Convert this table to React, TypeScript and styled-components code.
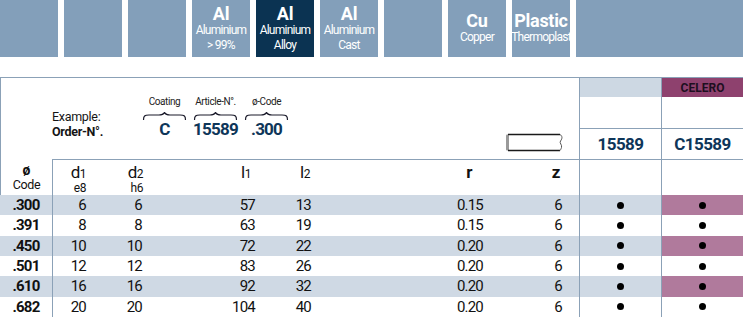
import React from "react";
import styled, { createGlobalStyle } from "styled-components";

const FONT = `Roboto, "Liberation Sans", sans-serif`;
const LINE = "#8ba1b7";
const TILE = "#839fba";
const TILE_DARK = "#0b3352";
const STRIPE = "#cfd9e4";
const PURPLE = "#8e416e";
const PURPLE_STRIPE = "#b07a9c";
const NAVY = "#0e3659";

const GlobalStyle = createGlobalStyle`
  html, body { margin: 0; padding: 0; background: #fff; }
  body { font-family: ${FONT}; color: #111; }
`;

const Page = styled.div`
  width: 743px;
  height: 318px;
  overflow: hidden;
`;

const TopBar = styled.div`
  display: grid;
  grid-template-columns: repeat(9, 58px) 1fr;
  gap: 6px;
  height: 57px;
`;

const Tile = styled.div<{ $dark?: boolean }>`
  background: ${(p) => (p.$dark ? TILE_DARK : TILE)};
  color: #fff;
  display: flex;
  flex-direction: column;
  align-items: center;
  justify-content: center;
  text-align: center;
  overflow: hidden;
`;

const TileSymbol = styled.div`
  font-weight: 700;
  font-size: 18px;
  line-height: 18px;
  letter-spacing: -0.3px;
`;

const TileName = styled.div`
  font-size: 12px;
  line-height: 15px;
  letter-spacing: -0.75px;
  white-space: nowrap;
`;

const Table = styled.div`
  margin-top: 20px;
  border-top: 1px solid ${LINE};
`;

const HeadRow = styled.div`
  display: grid;
  grid-template-columns: 578px 82px 82px;
  height: 81px;
  border-left: 1px solid ${LINE};
`;

const ExampleCell = styled.div`
  display: flex;
  align-items: flex-end;
  padding-left: 51px;
  padding-bottom: 20px;
`;

const ExampleBlock = styled.div`
  display: flex;
  flex-direction: column;
  width: 90px;
`;

const ExampleLine = styled.div<{ $bold?: boolean }>`
  font-size: 12.5px;
  line-height: 15px;
  letter-spacing: -0.3px;
  font-weight: ${(p) => (p.$bold ? 700 : 400)};
  color: #151515;
`;

const Groups = styled.div`
  display: flex;
  gap: 6px;
`;

const Group = styled.div`
  width: 45px;
  display: flex;
  flex-direction: column;
  align-items: center;
`;

const GroupLabel = styled.div`
  font-size: 10px;
  line-height: 12px;
  letter-spacing: -0.4px;
  margin-bottom: 4px;
  color: #222;
  white-space: nowrap;
`;

const GroupValue = styled.div`
  font-size: 17px;
  line-height: 19px;
  letter-spacing: -0.8px;
  font-weight: 700;
  color: ${NAVY};
`;

const PinWrap = styled.div`
  margin-left: auto;
  margin-right: 14px;
  margin-bottom: -13px;
  display: flex;
`;

const VariantCell = styled.div`
  border-left: 1px solid ${LINE};
  display: grid;
  grid-template-rows: 19px 31px 31px;
`;

const Band = styled.div<{ $celero?: boolean }>`
  background: ${(p) => (p.$celero ? PURPLE : "#cdd8e3")};
  display: flex;
  align-items: center;
  justify-content: center;
  font-size: 12px;
  font-weight: 700;
  color: #1d0f1f;
`;

const VariantNumber = styled.div`
  border-top: 1px solid ${LINE};
  display: flex;
  align-items: center;
  justify-content: center;
  font-size: 17px;
  letter-spacing: -0.6px;
  font-weight: 700;
  color: ${NAVY};
`;

const COLS_HEAD = "51px 35px 56px 113px 56px 172px 79px 16px 82px 82px";
const COLS_DATA = "52px 35px 56px 113px 56px 172px 79px 16px 82px 82px";

const ColHeadRow = styled.div`
  display: grid;
  grid-template-columns: ${COLS_HEAD};
  height: 36px;
  border-left: 1px solid ${LINE};
`;

const CodeHead = styled.div`
  display: flex;
  flex-direction: column;
  align-items: center;
  padding-top: 5px;
`;

const CodeSymbol = styled.div`
  font-size: 14px;
  line-height: 12px;
  font-weight: 700;
  margin-bottom: 2px;
`;

const CodeWord = styled.div`
  font-size: 12.5px;
  line-height: 14px;
  letter-spacing: -0.4px;
`;

const HeadCell = styled.div<{ $pr?: number; $divider?: boolean; $bold?: boolean }>`
  border-top: 1px solid ${LINE};
  border-left: ${(p) => (p.$divider ? `1px solid ${LINE}` : "none")};
  display: flex;
  flex-direction: column;
  align-items: flex-end;
  padding-top: 4px;
  padding-right: ${(p) => p.$pr ?? 0}px;
  font-weight: ${(p) => (p.$bold ? 700 : 400)};
`;

const Sym = styled.div`
  font-size: 17px;
  line-height: 16px;
  letter-spacing: -0.5px;
  white-space: nowrap;
`;

const Sub = styled.span`
  font-size: 12px;
`;

const Tol = styled.div`
  font-size: 12px;
  line-height: 13px;
  letter-spacing: -0.4px;
`;

const DataRow = styled.div<{ $striped?: boolean }>`
  display: grid;
  grid-template-columns: ${COLS_DATA};
  height: 20.33px;
  background: ${(p) => (p.$striped ? STRIPE : "#fff")};
  font-size: 15px;
  letter-spacing: -0.8px;
  line-height: 20.33px;
`;

const CodeCell = styled.div`
  text-align: center;
  font-weight: 700;
`;

const NumCell = styled.div<{ $divider?: boolean }>`
  text-align: right;
  padding-right: 1px;
  border-left: ${(p) => (p.$divider ? `1px solid ${LINE}` : "none")};
`;

const DotCell = styled.div<{ $celero?: boolean; $striped?: boolean }>`
  border-left: 1px solid ${LINE};
  display: flex;
  align-items: center;
  justify-content: center;
  background: ${(p) => (p.$celero ? (p.$striped ? PURPLE_STRIPE : "#fff") : "transparent")};
`;

const Dot = styled.span`
  width: 7px;
  height: 7px;
  border-radius: 50%;
  background: #000;
`;

const Brace = () => (
  <svg width="45" height="8" viewBox="0 0 45 8">
    <path
      d="M1.5 8 C1.5 4, 2.5 3, 7 3 H17 C20 3, 21.5 2.2, 22.5 0.6 C23.5 2.2, 25 3, 28 3 H38 C42.5 3, 43.5 4, 43.5 8"
      fill="none"
      stroke="#1a1a2a"
      strokeWidth="1.2"
    />
  </svg>
);

const PinIcon = () => (
  <svg width="60" height="19" viewBox="0 0 60 19">
    <rect x="1" y="1.5" width="3" height="16" rx="1" fill="#9a9a9a" />
    <path d="M3 1.5 H55 M3 17.5 H55" stroke="#1a1a1a" strokeWidth="1.3" fill="none" />
    <path
      d="M55 1.5 C57.5 3, 57.5 5.5, 55.5 8 C54 10, 57.5 12, 56.5 14.5 C56 16, 55.5 17, 55 17.5"
      fill="none"
      stroke="#555"
      strokeWidth="1"
    />
  </svg>
);

type TileData = { sym?: string; name?: string[]; dark?: boolean };
const tiles: TileData[] = [
  {},
  {},
  {},
  { sym: "Al", name: ["Aluminium", "> 99%"] },
  { sym: "Al", name: ["Aluminium", "Alloy"], dark: true },
  { sym: "Al", name: ["Aluminium", "Cast"] },
  {},
  { sym: "Cu", name: ["Copper"] },
  { sym: "Plastic", name: ["Thermoplast"] },
  {},
];

const rows = [
  [".300", "6", "6", "57", "13", "0.15", "6"],
  [".391", "8", "8", "63", "19", "0.15", "6"],
  [".450", "10", "10", "72", "22", "0.20", "6"],
  [".501", "12", "12", "83", "26", "0.20", "6"],
  [".610", "16", "16", "92", "32", "0.20", "6"],
  [".682", "20", "20", "104", "40", "0.20", "6"],
];

export default function App() {
  return (
    <Page>
      <GlobalStyle />
      <TopBar>
        {tiles.map((t, i) => (
          <Tile key={i} $dark={t.dark}>
            {t.sym && <TileSymbol>{t.sym}</TileSymbol>}
            {t.name?.map((n) => (
              <TileName key={n}>{n}</TileName>
            ))}
          </Tile>
        ))}
      </TopBar>

      <Table>
        <HeadRow>
          <ExampleCell>
            <ExampleBlock>
              <ExampleLine>Example:</ExampleLine>
              <ExampleLine $bold>Order-N°.</ExampleLine>
            </ExampleBlock>
            <Groups>
              <Group>
                <GroupLabel>Coating</GroupLabel>
                <Brace />
                <GroupValue>C</GroupValue>
              </Group>
              <Group>
                <GroupLabel>Article-N°.</GroupLabel>
                <Brace />
                <GroupValue>15589</GroupValue>
              </Group>
              <Group>
                <GroupLabel>ø-Code</GroupLabel>
                <Brace />
                <GroupValue>.300</GroupValue>
              </Group>
            </Groups>
            <PinWrap>
              <PinIcon />
            </PinWrap>
          </ExampleCell>
          <VariantCell>
            <Band />
            <div />
            <VariantNumber>15589</VariantNumber>
          </VariantCell>
          <VariantCell>
            <Band $celero>CELERO</Band>
            <div />
            <VariantNumber>C15589</VariantNumber>
          </VariantCell>
        </HeadRow>

        <ColHeadRow>
          <CodeHead>
            <CodeSymbol>ø</CodeSymbol>
            <CodeWord>Code</CodeWord>
          </CodeHead>
          <HeadCell $divider $pr={1}>
            <Sym>
              d<Sub>1</Sub>
            </Sym>
            <Tol>e8</Tol>
          </HeadCell>
          <HeadCell $pr={0}>
            <Sym>
              d<Sub>2</Sub>
            </Sym>
            <Tol>h6</Tol>
          </HeadCell>
          <HeadCell $pr={5}>
            <Sym>
              l<Sub>1</Sub>
            </Sym>
          </HeadCell>
          <HeadCell $pr={2}>
            <Sym>
              l<Sub>2</Sub>
            </Sym>
          </HeadCell>
          <HeadCell $pr={12} $bold>
            <Sym>r</Sym>
          </HeadCell>
          <HeadCell $pr={3} $bold>
            <Sym>z</Sym>
          </HeadCell>
          <HeadCell />
          <HeadCell $divider />
          <HeadCell $divider />
        </ColHeadRow>

        {rows.map((r, i) => {
          const striped = i % 2 === 0;
          return (
            <DataRow key={r[0]} $striped={striped}>
              <CodeCell>{r[0]}</CodeCell>
              <NumCell $divider>{r[1]}</NumCell>
              <NumCell>{r[2]}</NumCell>
              <NumCell>{r[3]}</NumCell>
              <NumCell>{r[4]}</NumCell>
              <NumCell>{r[5]}</NumCell>
              <NumCell>{r[6]}</NumCell>
              <div />
              <DotCell $striped={striped}>
                <Dot />
              </DotCell>
              <DotCell $celero $striped={striped}>
                <Dot />
              </DotCell>
            </DataRow>
          );
        })}
      </Table>
    </Page>
  );
}
